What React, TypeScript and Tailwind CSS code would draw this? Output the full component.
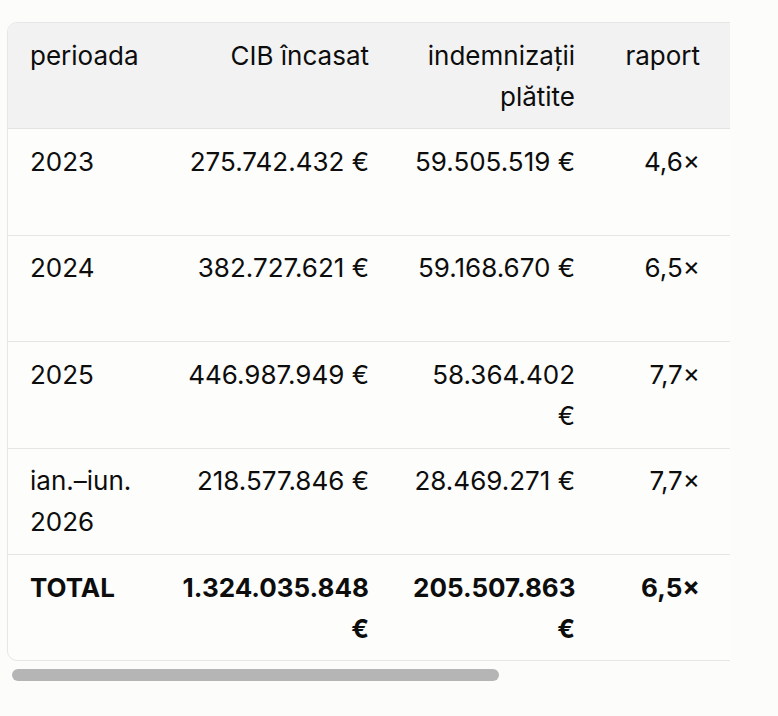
const rows = [
  { period: "2023", cib: "275.742.432 €", paid: "59.505.519 €", ratio: "4,6×" },
  { period: "2024", cib: "382.727.621 €", paid: "59.168.670 €", ratio: "6,5×" },
  { period: "2025", cib: "446.987.949 €", paid: "58.364.402 €", ratio: "7,7×" },
  { period: "ian.–iun. 2026", cib: "218.577.846 €", paid: "28.469.271 €", ratio: "7,7×" },
];

const cell = "px-[22px] py-[11.7px] align-top";

export default function App() {
  return (
    <div
      className="min-h-screen bg-[#fcfcfb] pl-[7px] pt-[22px] text-[26px] leading-[41px] text-[#0d0d0d]"
      style={{ fontFamily: "Inter, 'Noto Sans', sans-serif" }}
    >
      <div className="w-[723px] overflow-x-hidden">
        <div className="w-[1058px] overflow-hidden rounded-[10px] border border-[#e6e6e6] bg-[#fdfdfc]">
          <table className="w-full table-fixed border-collapse">
            <colgroup>
              <col className="w-[150px]" />
              <col className="w-[233px]" />
              <col className="w-[206px]" />
              <col className="w-[125px]" />
              <col />
            </colgroup>
            <thead className="bg-[#f2f2f2]">
              <tr className="border-b border-[#e3e3e3]">
                <th className={`${cell} text-left font-normal`}>perioada</th>
                <th className={`${cell} text-right font-normal`}>CIB încasat</th>
                <th className={`${cell} text-right font-normal`}>indemnizații plătite</th>
                <th className={`${cell} text-right font-normal`}>raport</th>
                <th className={cell} />
              </tr>
            </thead>
            <tbody>
              {rows.map((r) => (
                <tr key={r.period} className="border-b border-[#e6e6e6]">
                  <td className={`${cell} text-left`}>{r.period}</td>
                  <td className={`${cell} text-right`}>{r.cib}</td>
                  <td className={`${cell} text-right`}>{r.paid}</td>
                  <td className={`${cell} text-right`}>{r.ratio}</td>
                  <td className={cell}>
                    <div className="h-[82px]" />
                  </td>
                </tr>
              ))}
              <tr className="font-bold">
                <td className={`${cell} text-left`}>TOTAL</td>
                <td className={`${cell} text-right`}>1.324.035.848 €</td>
                <td className={`${cell} text-right`}>205.507.863 €</td>
                <td className={`${cell} text-right`}>6,5×</td>
                <td className={cell} />
              </tr>
            </tbody>
          </table>
        </div>
      </div>
      {/* horizontal scroll thumb */}
      <div className="ml-[5px] mt-[8px] h-[12px] w-[487px] rounded-full bg-[#b5b5b5]" />
    </div>
  );
}
